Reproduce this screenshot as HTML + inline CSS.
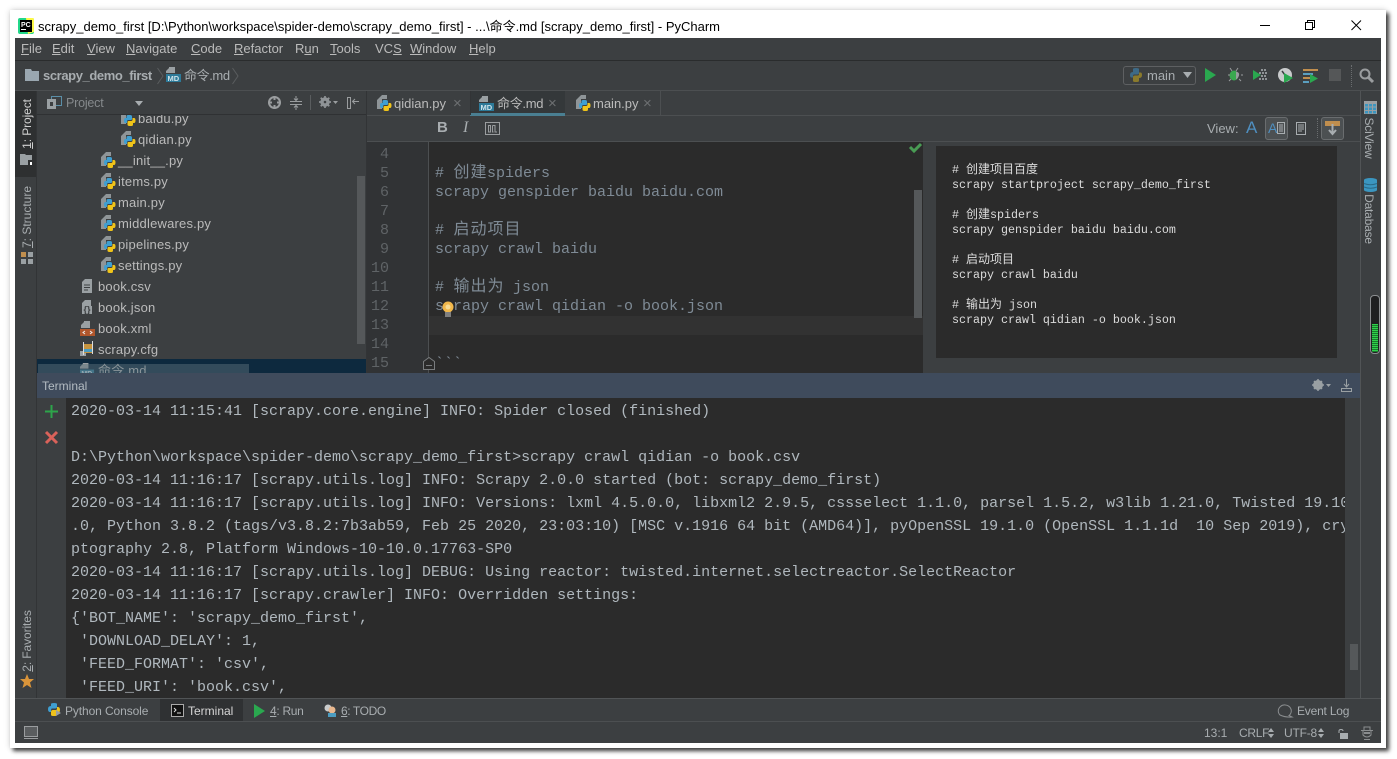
<!DOCTYPE html>
<html><head><meta charset="utf-8">
<style>
html,body{margin:0;padding:0;background:#fff;width:1397px;height:759px;overflow:hidden}
*{box-sizing:border-box}
.a{position:absolute}
.t{position:absolute;white-space:pre;font-family:"Liberation Sans","WenQuanYi Zen Hei","Noto Sans CJK SC",sans-serif;font-size:13px;color:#bbb;line-height:16px}
.term div{position:absolute;left:0;white-space:pre;line-height:23px;height:23px;color:#b0b8be;font-family:"Liberation Mono",monospace;font-size:15px}
.ed div{position:absolute;left:6px;white-space:pre;line-height:19px;height:19px;color:#7f8b96;font-family:"Liberation Mono",monospace;font-size:15px}
.ed i{font-style:normal;display:inline-block;width:17px;line-height:0;font-family:"WenQuanYi Zen Hei","Noto Sans CJK SC",sans-serif;font-size:16px;text-align:center}
.ln div{position:absolute;right:0;width:40px;text-align:right;line-height:19px;color:#5f6366;font-family:"Liberation Mono",monospace;font-size:15px}
.pv div{position:absolute;left:0;white-space:pre;line-height:15px;height:15px;color:#dcdcdc;font-family:"Liberation Mono",monospace;font-size:11.67px}
.pv i{font-style:normal;display:inline-block;width:12px;line-height:0;font-family:"WenQuanYi Zen Hei","Noto Sans CJK SC",sans-serif;font-size:12px;text-align:center}
.tr{position:absolute;white-space:pre;color:#bbb;font-family:"Liberation Sans","WenQuanYi Zen Hei",sans-serif;font-size:13px;letter-spacing:.2px;line-height:16px;margin-top:1px}
u{text-decoration:underline}
svg{position:absolute;overflow:visible}
</style></head>
<body>
<svg width="0" height="0" style="position:absolute"><defs>
<symbol id="py" viewBox="0 0 15 16"><path d="M0 5L5 0H10V4H5V14H0Z" fill="#8f9598"/><path d="M9 5H7Q5.500 5 5.500 6.500V8H4.500Q3 8 3 10.500T4.500 13H6V11.500Q6 10 7.500 10H10Q11 10 11 9V6.500Q11 5 9 5Z" fill="#3f9fd1"/><path d="M8.500 16H10.500Q12 16 12 14.500V13H13Q14.500 13 14.500 10.500T13 8H11.500V9.500Q11.500 11 10 11H7.500Q6.500 11 6.500 12V14.500Q6.500 16 8.500 16Z" fill="#f0c419"/></symbol>
<symbol id="md" viewBox="0 0 16 16"><path d="M3 0H9V6H3Z M0 4L3 1V6H0Z" fill="#9aa0a3"/><rect x="0" y="7" width="15" height="8" fill="#2d7a99"/><text x="1.500" y="14" font-family="Liberation Sans" font-size="7.500" font-weight="bold" fill="#cfe3ea">MD</text></symbol>
<symbol id="gear" viewBox="0 0 14 14"><circle cx="7" cy="7" r="4" fill="none" stroke="#8f9396" stroke-width="3"/><path d="M7 0V14M0 7H14M2 2L12 12M12 2L2 12" stroke="#8f9396" stroke-width="2"/><circle cx="7" cy="7" r="1.500" fill="#3c3f41"/></symbol>
</defs></svg>

<!-- window -->
<div class="a" style="left:10px;top:10px;width:1376px;height:738px;background:#fff;box-shadow:3px 3px 4px rgba(0,0,0,.75),0 0 6px rgba(0,0,0,.18)"></div>
<!-- title -->
<svg style="left:18px;top:18px" width="16" height="16"><rect x="0" y="0" width="16" height="16" rx="2" fill="#21d789"/><path d="M8 0H15Q16 0 16 2V14L10 16Z" fill="#fcf84a"/><rect x="2" y="2" width="12" height="12" fill="#000"/><text x="3" y="9" font-family="Liberation Sans" font-size="7" font-weight="bold" fill="#fff">PC</text><rect x="3" y="11" width="5" height="1" fill="#fff"/></svg>
<div class="t" style="left:38px;top:19px;color:#000;font-size:13px">scrapy_demo_first [D:\Python\workspace\spider-demo\scrapy_demo_first] - ...\命令.md [scrapy_demo_first] - PyCharm</div>
<svg style="left:1260px;top:20px" width="110" height="12" fill="none" stroke="#000"><path d="M0 5.500H10"/><rect x="45.500" y="2.500" width="7" height="7"/><path d="M47.500 2.500V.5H54.500V7.500H52.500"/><path d="M91.500 .5L101 10M101 .5L91.500 10"/></svg>

<!-- IDE -->
<div class="a" style="left:15px;top:38px;width:1366px;height:705px;background:#3c3f41;overflow:hidden"></div>
<div class="a" style="left:15px;top:60px;width:1366px;height:1px;background:#2a2c2d"></div>
<div class="a" style="left:15px;top:90px;width:1366px;height:1px;background:#4c4f51"></div>
<!-- menu -->
<div class="t" style="left:21px;top:41px"><u>F</u>ile</div>
<div class="t" style="left:52px;top:41px"><u>E</u>dit</div>
<div class="t" style="left:87px;top:41px"><u>V</u>iew</div>
<div class="t" style="left:126px;top:41px"><u>N</u>avigate</div>
<div class="t" style="left:191px;top:41px"><u>C</u>ode</div>
<div class="t" style="left:234px;top:41px"><u>R</u>efactor</div>
<div class="t" style="left:295px;top:41px">R<u>u</u>n</div>
<div class="t" style="left:330px;top:41px"><u>T</u>ools</div>
<div class="t" style="left:375px;top:41px">VC<u>S</u></div>
<div class="t" style="left:410px;top:41px"><u>W</u>indow</div>
<div class="t" style="left:469px;top:41px"><u>H</u>elp</div>
<!-- nav -->
<svg style="left:25px;top:69px" width="14" height="12"><path d="M0 0H6L7 2H14V12H0Z" fill="#9aa7b0"/></svg>
<div class="t" style="left:43px;top:68px;font-weight:bold;color:#a8adb0;letter-spacing:-.4px">scrapy_demo_first</div>
<svg style="left:157px;top:68px" width="8" height="16" fill="none" stroke="#5a5d5f"><path d="M.5 0L6 8L.5 16"/></svg>
<svg style="left:166px;top:67px" width="16" height="16"><use href="#md"/></svg>
<div class="t" style="left:184px;top:68px;color:#a8adb0;letter-spacing:-.4px">命令.md</div>
<svg style="left:232px;top:68px" width="8" height="16" fill="none" stroke="#5a5d5f"><path d="M.5 0L6 8L.5 16"/></svg>
<!-- run toolbar -->
<div class="a" style="left:1123px;top:66px;width:73px;height:19px;border:1px solid #5e6062;border-radius:3px;background:#3c3f41"></div>
<svg style="left:1129px;top:68px" width="14" height="14"><path d="M1 7Q1 4 4 4H4V1Q4 0 7 0T10 1V5Q10 6.500 8 6.500H5Q4 6.500 4 8.500V9.500H2.500Q1 9.500 1 7Z" fill="#3d6a87"/><path d="M13 7Q13 10 10 10V13Q10 14 7 14T4 13V9Q4 7.500 6 7.500H9Q10 7.500 10 5.500V4.500H11.500Q13 4.500 13 7Z" fill="#8a7a2c"/></svg>
<div class="t" style="left:1147px;top:68px;color:#a8adb0">main</div>
<svg style="left:1183px;top:72px" width="9" height="6"><path d="M0 0H9L4.500 6Z" fill="#a8adb0"/></svg>
<svg style="left:1205px;top:68px" width="12" height="14"><path d="M0 0L11 7L0 14Z" fill="#2aa84f"/></svg>
<svg style="left:1228px;top:67px" width="15" height="16"><ellipse cx="6" cy="8.500" rx="4.500" ry="5" fill="#3aa94f"/><path d="M8 4.500Q12 5.500 11 8.500T8 12.500Z" fill="#9a9d9f"/><path d="M2 1L4 4M10 1L8 4M0 8H2M13 8H15M1 14L3 12M13 14L11 12" stroke="#9a9d9f"/></svg>
<svg style="left:1253px;top:68px" width="15" height="14"><path d="M0 2L8 7L0 12Z" fill="#2aa84f"/><path d="M8 1H10V3H8ZM11 1H13V3H11ZM6 4H8V6H6ZM9 4H11V6H9ZM12 4H14V6H12ZM8 7H10V9H8ZM11 7H13V9H11ZM6 10H8V12H6ZM9 10H11V12H9ZM12 10H14V12H12Z" fill="#8f9396"/></svg>
<svg style="left:1278px;top:68px" width="15" height="15"><circle cx="7" cy="7" r="7" fill="#c9cbcc"/><path d="M7 7L4 3" stroke="#3c3f41" stroke-width="1.500"/><path d="M6 5L15 10L6 15Z" fill="#2aa84f"/></svg>
<svg style="left:1303px;top:69px" width="15" height="14"><rect y="0" width="15" height="2" fill="#c08e4e"/><rect y="4" width="10" height="2" fill="#5b9fc0"/><rect y="8" width="7" height="2" fill="#c08e4e"/><rect y="12" width="6" height="2" fill="#5b9fc0"/><path d="M7 5L15 9.500L7 14Z" fill="#2aa84f"/></svg>
<div class="a" style="left:1329px;top:69px;width:12px;height:12px;background:#555758"></div>
<div class="a" style="left:1351px;top:65px;width:1px;height:22px;border-left:1px dotted #6a6d6f"></div>
<svg style="left:1359px;top:68px" width="15" height="15" fill="none" stroke="#9a9d9f" stroke-width="2"><circle cx="6" cy="6" r="4.500"/><path d="M9.500 9.500L14 14" stroke-width="3"/></svg>

<!-- left strip -->
<div class="a" style="left:36px;top:91px;width:1px;height:607px;background:#323436"></div>
<div class="a" style="left:15px;top:91px;width:21px;height:86px;background:#2e3031"></div>
<div class="t" style="left:27px;top:124px;transform:translate(-50%,-50%) rotate(-90deg);font-size:12px;letter-spacing:-.1px;color:#d0d0d0"><u>1</u>: Project</div>
<svg style="left:20px;top:154px" width="13" height="12"><path d="M0 0H5L6 1H12V6H8V11H0Z" fill="#9aa0a3"/><rect x="10" y="8" width="2" height="3" fill="#fff"/></svg>
<div class="t" style="left:27px;top:217px;transform:translate(-50%,-50%) rotate(-90deg);font-size:12px;color:#a8adb0"><u>7</u>: Structure</div>
<svg style="left:21px;top:252px" width="12" height="12"><rect width="5" height="5" fill="#c08e4e"/><rect x="7" width="5" height="5" fill="#9aa0a3"/><rect y="7" width="5" height="5" fill="#9aa0a3"/><rect x="7" y="7" width="5" height="5" fill="#9aa0a3"/></svg>
<div class="t" style="left:27px;top:641px;transform:translate(-50%,-50%) rotate(-90deg);font-size:12px;letter-spacing:-.1px;color:#a8adb0"><u>2</u>: Favorites</div>
<svg style="left:20px;top:674px" width="14" height="14"><path d="M7 0L9 5H14L10 8.500L11.500 14L7 11L2.500 14L4 8.500L0 5H5Z" fill="#d9943a"/></svg>

<!-- project header -->
<div class="a" style="left:37px;top:114px;width:329px;height:1px;background:#2f3133"></div>
<svg style="left:47px;top:96px" width="15" height="14" fill="none"><rect x="4.500" y=".5" width="10" height="9" stroke="#5b8fa8"/><rect x="0" y="3" width="9" height="10" fill="#9aa0a3"/><rect x="3" y="6" width="3" height="4" fill="#3c3f41"/></svg>
<div class="t" style="left:66px;top:95px;color:#85898c;font-size:12.500px;letter-spacing:-.2px">Project</div>
<svg style="left:135px;top:101px" width="8" height="5"><path d="M0 0H8L4 5Z" fill="#a8adb0"/></svg>
<svg style="left:268px;top:96px" width="13" height="13" fill="none" stroke="#9a9d9f" stroke-width="2"><circle cx="6.500" cy="6.500" r="5.500"/><path d="M6.500 0V4M6.500 9V13M0 6.500H4M9 6.500H13"/></svg>
<svg style="left:290px;top:96px" width="12" height="14" fill="none" stroke="#9a9d9f"><path d="M0 5.500H12M0 8.500H12M6 0V4M6 10V14M4 2.500L6 4.500L8 2.500M4 11.500L6 9.500L8 11.500"/></svg>
<div class="a" style="left:310px;top:95px;width:1px;height:15px;background:#5a5d5f"></div>
<svg style="left:319px;top:96px" width="12" height="12"><use href="#gear"/></svg>
<svg style="left:333px;top:101px" width="5" height="3"><path d="M0 0H5L2.500 3Z" fill="#9a9d9f"/></svg>
<svg style="left:347px;top:96px" width="13" height="14" fill="none" stroke="#9a9d9f"><rect x=".5" y="1.500" width="3" height="11"/><path d="M12 5.500H6M8 3L5.500 5.500L8 8"/></svg>

<!-- tree -->
<div class="a" style="left:37px;top:115px;width:329px;height:258px;overflow:hidden">
<div class="a" style="left:0;top:244px;width:329px;height:14px;background:#0d293e"></div>
<svg style="left:84px;top:-5px" width="15" height="16"><use href="#py"/></svg><div class="tr" style="left:101px;top:-5px">baidu.py</div>
<svg style="left:84px;top:16px" width="15" height="16"><use href="#py"/></svg><div class="tr" style="left:101px;top:16px">qidian.py</div>
<svg style="left:64px;top:37px" width="15" height="16"><use href="#py"/></svg><div class="tr" style="left:81px;top:37px">__init__.py</div>
<svg style="left:64px;top:58px" width="15" height="16"><use href="#py"/></svg><div class="tr" style="left:81px;top:58px">items.py</div>
<svg style="left:64px;top:79px" width="15" height="16"><use href="#py"/></svg><div class="tr" style="left:81px;top:79px">main.py</div>
<svg style="left:64px;top:100px" width="15" height="16"><use href="#py"/></svg><div class="tr" style="left:81px;top:100px">middlewares.py</div>
<svg style="left:64px;top:121px" width="15" height="16"><use href="#py"/></svg><div class="tr" style="left:81px;top:121px">pipelines.py</div>
<svg style="left:64px;top:142px" width="15" height="16"><use href="#py"/></svg><div class="tr" style="left:81px;top:142px">settings.py</div>
<svg style="left:45px;top:164px" width="11" height="14"><path d="M0 3L3 0H10V14H0Z" fill="#9aa0a3"/><path d="M2 6H8M2 8.500H8M2 11H6" stroke="#3c3f41"/></svg><div class="tr" style="left:61px;top:163px">book.csv</div>
<svg style="left:45px;top:185px" width="14" height="14"><path d="M0 3L3 0H9V6H10V14H0Z" fill="#9aa0a3"/><text x="1.500" y="12.500" font-family="Liberation Sans" font-size="9" font-weight="bold" fill="#3c3f41">{}</text></svg><div class="tr" style="left:61px;top:184px">book.json</div>
<svg style="left:43px;top:206px" width="15" height="15"><path d="M4 0H10V7H4Z M1 4L4 1V7H1Z" fill="#9aa0a3"/><rect y="8" width="15" height="7" fill="#b0562c"/><path d="M5 10L3 11.500L5 13M10 10L12 11.500L10 13" stroke="#eee" fill="none"/></svg><div class="tr" style="left:61px;top:205px">book.xml</div>
<svg style="left:43px;top:226px" width="15" height="15"><rect x="0" y="10" width="6" height="5" fill="#9aa0a3"/><rect x="4" y="3" width="8" height="9" fill="#c6943f"/><rect x="4" y="8" width="8" height="3" fill="#4b9cc0"/><rect x="3" y="1" width="1" height="13" fill="#ddd"/><rect x="12" y="0" width="1" height="13" fill="#ddd"/></svg><div class="tr" style="left:61px;top:226px">scrapy.cfg</div>
<svg style="left:43px;top:248px" width="15" height="15"><use href="#md"/></svg><div class="tr" style="left:61px;top:247px">命令.md</div>
<div class="a" style="left:1px;top:249px;width:211px;height:9px;background:rgba(90,110,120,.5)"></div>
<div class="a" style="left:320px;top:61px;width:8px;height:168px;background:#55585a"></div>
</div>
<div class="a" style="left:366px;top:91px;width:1px;height:282px;background:#323436"></div>

<!-- editor tabs -->
<div class="a" style="left:367px;top:115px;width:993px;height:1px;background:#4c4f51"></div>
<div class="a" style="left:470px;top:91px;width:95px;height:24px;background:#34383a"></div>
<div class="a" style="left:470px;top:113px;width:95px;height:3px;background:#4a7f92"></div>
<div class="a" style="left:470px;top:91px;width:1px;height:24px;background:#323436"></div>
<div class="a" style="left:660px;top:91px;width:1px;height:24px;background:#4c4f51"></div>
<svg style="left:377px;top:95px" width="15" height="16"><use href="#py"/></svg><div class="t" style="left:394px;top:96px">qidian.py</div>
<div class="t" style="left:453px;top:96px;color:#6d7072;font-size:15px">×</div>
<svg style="left:479px;top:96px" width="16" height="16"><use href="#md"/></svg><div class="t" style="left:497px;top:96px;letter-spacing:-.3px">命令.md</div>
<div class="t" style="left:548px;top:96px;color:#6d7072;font-size:15px">×</div>
<svg style="left:576px;top:95px" width="15" height="16"><use href="#py"/></svg><div class="t" style="left:593px;top:96px">main.py</div>
<div class="t" style="left:643px;top:96px;color:#6d7072;font-size:15px">×</div>
<!-- md toolbar -->
<div class="a" style="left:367px;top:141px;width:993px;height:1px;background:#4c4f51"></div>
<div class="t" style="left:437px;top:120px;font-weight:bold;font-size:15px;color:#a8adb0">B</div>
<div class="t" style="left:463px;top:120px;font-style:italic;font-size:16px;color:#a8adb0;font-family:'Liberation Serif',serif">I</div>
<svg style="left:485px;top:122px" width="15" height="13" fill="none" stroke="#9a9d9f"><rect x=".5" y=".5" width="14" height="12"/><path d="M3.500 10V3.500H5.500V10M7.500 10V3.500M7.500 3.500H10V10M3 10H6M7 10H8.500M9.500 10H12"/></svg>
<div class="t" style="left:1207px;top:121px;color:#a8adb0">View:</div>
<div class="t" style="left:1246px;top:120px;color:#4f8fc0;font-size:17px">A</div>
<div class="a" style="left:1265px;top:117px;width:23px;height:23px;border:1px solid #6a6d6f;border-radius:3px;background:#4c5052"></div>
<div class="t" style="left:1268px;top:120px;color:#4f8fc0;font-size:14px">A</div>
<svg style="left:1277px;top:122px" width="8" height="12" fill="none" stroke="#a8adb0"><rect x=".5" y=".5" width="7" height="11"/><path d="M2 3H6M2 5H6M2 7H6M2 9H6"/></svg>
<svg style="left:1296px;top:122px" width="10" height="13" fill="none" stroke="#a8adb0"><rect x=".5" y=".5" width="9" height="12" stroke-width="1"/><path d="M2 3H8M2 5H8M2 7H8M2 9H6"/></svg>
<div class="a" style="left:1317px;top:118px;width:1px;height:20px;border-left:1px dotted #6a6d6f"></div>
<div class="a" style="left:1321px;top:117px;width:23px;height:23px;border:1px solid #6a6d6f;border-radius:3px;background:#4c5052"></div>
<svg style="left:1325px;top:121px" width="15" height="15"><rect width="15" height="5" fill="#c08e4e"/><path d="M7.500 3V12M4 9L7.500 13L11 9" stroke="#a8adb0" stroke-width="2" fill="none"/></svg>

<!-- editor -->
<div class="a" style="left:367px;top:142px;width:62px;height:231px;background:#313335"></div>
<div class="a" style="left:428px;top:142px;width:1px;height:231px;background:#4c4f51"></div>
<div class="a" style="left:429px;top:142px;width:494px;height:231px;background:#2b2b2b"></div>
<div class="a" style="left:429px;top:316px;width:494px;height:19px;background:#323232"></div>
<div class="a ln" style="left:349px;top:142px;width:40px;height:231px;overflow:hidden">
<div style="top:3px">4</div><div style="top:22px">5</div><div style="top:41px">6</div><div style="top:60px">7</div><div style="top:79px">8</div><div style="top:98px">9</div><div style="top:117px">10</div><div style="top:136px">11</div><div style="top:155px">12</div><div style="top:174px">13</div><div style="top:193px">14</div><div style="top:212px">15</div>
</div>
<div class="a ed" style="left:429px;top:142px;width:485px;height:231px;overflow:hidden">
<div style="top:-16px">scrapy startproject scrapy_demo_first</div>
<div style="top:22px"># <i>创</i><i>建</i>spiders</div>
<div style="top:41px">scrapy genspider baidu baidu.com</div>
<div style="top:79px"># <i>启</i><i>动</i><i>项</i><i>目</i></div>
<div style="top:98px">scrapy crawl baidu</div>
<div style="top:136px"># <i>输</i><i>出</i><i>为</i> json</div>
<div style="top:155px">scrapy crawl qidian -o book.json</div>
<div style="top:212px">&#96;&#96;&#96;</div>
</div>
<svg style="left:442px;top:301px" width="12" height="16"><circle cx="6" cy="6" r="5.500" fill="#f2b84b"/><circle cx="6" cy="6" r="2.500" fill="#f8dc94"/><rect x="3" y="11" width="6" height="5" fill="#7f7f7f"/></svg>
<svg style="left:423px;top:357px" width="12" height="14" fill="#2b2b2b" stroke="#7a7d7f"><path d="M.5 4.500L6 .5L11.500 4.500V12.500H.5Z"/><path d="M3 8.500H9"/></svg>
<svg style="left:909px;top:143px" width="13" height="10"><path d="M1 4L5 8L12 1" fill="none" stroke="#499c54" stroke-width="3"/></svg>
<div class="a" style="left:914px;top:190px;width:8px;height:128px;background:#55585a"></div>

<!-- preview -->
<div class="a" style="left:923px;top:142px;width:437px;height:231px;background:#3c3f41"></div>
<div class="a" style="left:936px;top:146px;width:401px;height:212px;background:#2b2b2b"></div>
<div class="a pv" style="left:952px;top:147px;width:380px;height:200px">
<div style="top:16px"># <i>创</i><i>建</i><i>项</i><i>目</i><i>百</i><i>度</i></div>
<div style="top:31px">scrapy startproject scrapy_demo_first</div>
<div style="top:61px"># <i>创</i><i>建</i>spiders</div>
<div style="top:76px">scrapy genspider baidu baidu.com</div>
<div style="top:106px"># <i>启</i><i>动</i><i>项</i><i>目</i></div>
<div style="top:121px">scrapy crawl baidu</div>
<div style="top:151px"># <i>输</i><i>出</i><i>为</i> json</div>
<div style="top:166px">scrapy crawl qidian -o book.json</div>
</div>

<!-- right strip -->
<div class="a" style="left:1360px;top:91px;width:1px;height:607px;background:#515456"></div>
<svg style="left:1364px;top:101px" width="13" height="13"><rect width="13" height="13" fill="#9aa0a3"/><path d="M1 3H4V5.500H1ZM5 3H8V5.500H5ZM9 3H12V5.500H9ZM1 6.500H4V9H1ZM5 6.500H8V9H5ZM9 6.500H12V9H9ZM1 10H4V12.500H1ZM5 10H8V12.500H5ZM9 10H12V12.500H9Z" fill="#3b96c0"/></svg>
<div class="t" style="left:1369px;top:138px;transform:translate(-50%,-50%) rotate(90deg);font-size:12px;letter-spacing:-.2px;color:#a8adb0">SciView</div>
<svg style="left:1364px;top:178px" width="13" height="14"><ellipse cx="6.500" cy="2" rx="6.500" ry="2" fill="#3b96c0"/><rect y="2" width="13" height="10" fill="#3b96c0"/><ellipse cx="6.500" cy="12" rx="6.500" ry="2" fill="#3b96c0"/><path d="M0 5.500Q6.500 8 13 5.500M0 9Q6.500 11.500 13 9" stroke="#2a6a88" fill="none"/></svg>
<div class="t" style="left:1369px;top:219px;transform:translate(-50%,-50%) rotate(90deg);font-size:12px;letter-spacing:-.2px;color:#a8adb0">Database</div>
<div class="a" style="left:1370px;top:295px;width:10px;height:59px;background:#1e1f20;border:1px solid #8a8d8f;border-radius:4px"></div>
<div class="a" style="left:1372px;top:324px;width:6px;height:28px;background:repeating-linear-gradient(#2fd04a 0 1px,#167a2a 1px 2px)"></div>

<!-- terminal -->
<div class="a" style="left:37px;top:373px;width:1323px;height:25px;background:#3f4b5c"></div>
<div class="t" style="left:42px;top:378px;font-size:12px;color:#b4bcc2">Terminal</div>
<svg style="left:1312px;top:379px" width="12" height="12"><circle cx="6" cy="6" r="3.500" fill="none" stroke="#9aa0a3" stroke-width="3"/><path d="M6 0V12M0 6H12M2 2L10 10M10 2L2 10" stroke="#9aa0a3" stroke-width="1.500"/></svg>
<svg style="left:1326px;top:384px" width="5" height="3"><path d="M0 0H5L2.500 3Z" fill="#9aa0a3"/></svg>
<svg style="left:1341px;top:379px" width="12" height="13" fill="none" stroke="#9aa0a3"><path d="M5.500 0V7M3 5L5.500 8L8 5"/><rect x=".5" y="9.500" width="10" height="3"/></svg>
<div class="a" style="left:37px;top:398px;width:1323px;height:300px;background:#3c3f41"></div>
<div class="a" style="left:66px;top:398px;width:1279px;height:300px;background:#2b2b2b;overflow:hidden"></div>
<svg style="left:45px;top:405px" width="13" height="13"><path d="M6.500 0V13M0 6.500H13" stroke="#2da44a" stroke-width="2"/></svg>
<svg style="left:45px;top:431px" width="13" height="13"><path d="M1 1L12 12M12 1L1 12" stroke="#d9625a" stroke-width="3"/></svg>
<div class="a term" style="left:71px;top:400px;width:1274px;height:298px;overflow:hidden">
<div style="top:0">2020-03-14 11:15:41 [scrapy.core.engine] INFO: Spider closed (finished)</div>
<div style="top:46px">D:\Python\workspace\spider-demo\scrapy_demo_first&gt;scrapy crawl qidian -o book.csv</div>
<div style="top:69px">2020-03-14 11:16:17 [scrapy.utils.log] INFO: Scrapy 2.0.0 started (bot: scrapy_demo_first)</div>
<div style="top:92px">2020-03-14 11:16:17 [scrapy.utils.log] INFO: Versions: lxml 4.5.0.0, libxml2 2.9.5, cssselect 1.1.0, parsel 1.5.2, w3lib 1.21.0, Twisted 19.10</div>
<div style="top:115px">.0, Python 3.8.2 (tags/v3.8.2:7b3ab59, Feb 25 2020, 23:03:10) [MSC v.1916 64 bit (AMD64)], pyOpenSSL 19.1.0 (OpenSSL 1.1.1d  10 Sep 2019), cry</div>
<div style="top:138px">ptography 2.8, Platform Windows-10-10.0.17763-SP0</div>
<div style="top:161px">2020-03-14 11:16:17 [scrapy.utils.log] DEBUG: Using reactor: twisted.internet.selectreactor.SelectReactor</div>
<div style="top:184px">2020-03-14 11:16:17 [scrapy.crawler] INFO: Overridden settings:</div>
<div style="top:207px">{'BOT_NAME': 'scrapy_demo_first',</div>
<div style="top:230px"> 'DOWNLOAD_DELAY': 1,</div>
<div style="top:253px"> 'FEED_FORMAT': 'csv',</div>
<div style="top:276px"> 'FEED_URI': 'book.csv',</div>
</div>
<div class="a" style="left:1350px;top:644px;width:8px;height:26px;background:#55585a"></div>

<!-- bottom -->
<div class="a" style="left:15px;top:698px;width:1366px;height:1px;background:#515456"></div>
<div class="a" style="left:15px;top:721px;width:1366px;height:1px;background:#4c4f51"></div>
<div class="a" style="left:160px;top:699px;width:83px;height:22px;background:#2f3133"></div>
<svg style="left:48px;top:703px" width="13" height="14"><path d="M0 6Q0 3 3 3V1Q3 0 6 0T9 1V4Q9 5.500 7 5.500H4Q3 5.500 3 8V9H2Q0 9 0 6Z" fill="#3f9fd1"/><path d="M12 7Q12 10 9 10V12Q9 13 6 13T3 12V9Q3 7 5 7H8Q9 7 9 5V4H10Q12 4 12 7Z" fill="#eec21b"/><path d="M8 7L13 10L8 13Z" fill="#9aa0a3"/></svg>
<div class="t" style="left:65px;top:703px;font-size:12px;letter-spacing:-.1px;color:#a8adb0">Python Console</div>
<svg style="left:171px;top:704px" width="13" height="13"><rect x=".5" y=".5" width="12" height="12" fill="#111" stroke="#aaa"/><path d="M3 4L5 6L3 8M6 9H10" stroke="#ddd" fill="none"/></svg>
<div class="t" style="left:188px;top:703px;font-size:12px;color:#d5d5d5">Terminal</div>
<svg style="left:254px;top:704px" width="12" height="14"><path d="M0 0L11 7L0 14Z" fill="#2aa84f"/></svg>
<div class="t" style="left:270px;top:703px;font-size:12px;letter-spacing:-.3px;color:#a8adb0"><u>4</u>: Run</div>
<svg style="left:324px;top:704px" width="14" height="13"><circle cx="4" cy="4" r="3.500" fill="#c9cbcc"/><circle cx="8" cy="6" r="3.500" fill="#e8b78e"/><rect x="4" y="9" width="8" height="4" fill="#4b9cc0"/></svg>
<div class="t" style="left:341px;top:703px;font-size:12px;letter-spacing:-.4px;color:#a8adb0"><u>6</u>: TODO</div>
<svg style="left:1277px;top:703px" width="16" height="15" fill="none" stroke="#8a8d8f"><path d="M3 12A6.500 6 0 1 1 12 12.500L15 14Q8 14.500 3 12Z"/></svg>
<div class="t" style="left:1297px;top:703px;font-size:12px;letter-spacing:-.2px;color:#a8adb0">Event Log</div>
<!-- status -->
<svg style="left:24px;top:726px" width="14" height="14"><rect x=".5" y=".5" width="13" height="10" fill="#5a5d5f" stroke="#9a9d9f"/><rect x="0" y="12" width="14" height="1" fill="#9a9d9f"/></svg>
<div class="t" style="left:1204px;top:725px;font-size:12px;color:#a8adb0">13:1</div>
<div class="t" style="left:1239px;top:725px;font-size:12px;letter-spacing:-.3px;color:#a8adb0">CRLF</div>
<svg style="left:1268px;top:728px" width="6" height="10"><path d="M0 4L3 0L6 4ZM0 6H6L3 10Z" fill="#a8adb0"/></svg>
<div class="t" style="left:1284px;top:725px;font-size:12px;letter-spacing:-.2px;color:#a8adb0">UTF-8</div>
<svg style="left:1318px;top:728px" width="6" height="10"><path d="M0 4L3 0L6 4ZM0 6H6L3 10Z" fill="#a8adb0"/></svg>
<svg style="left:1338px;top:729px" width="10" height="10"><path d="M1 4V2Q1 .5 3 .5T5 2" fill="none" stroke="#a8adb0"/><rect x="2" y="4" width="8" height="6" fill="#a8adb0"/></svg>
<svg style="left:1361px;top:726px" width="12" height="14" fill="none" stroke="#8a8d8f"><path d="M3 4V1H9V4M0 4.500H12M2 5V9Q6 13 10 9V5M3 13.500H9"/><path d="M3 7H9" stroke-width="2"/></svg>
</body></html>
